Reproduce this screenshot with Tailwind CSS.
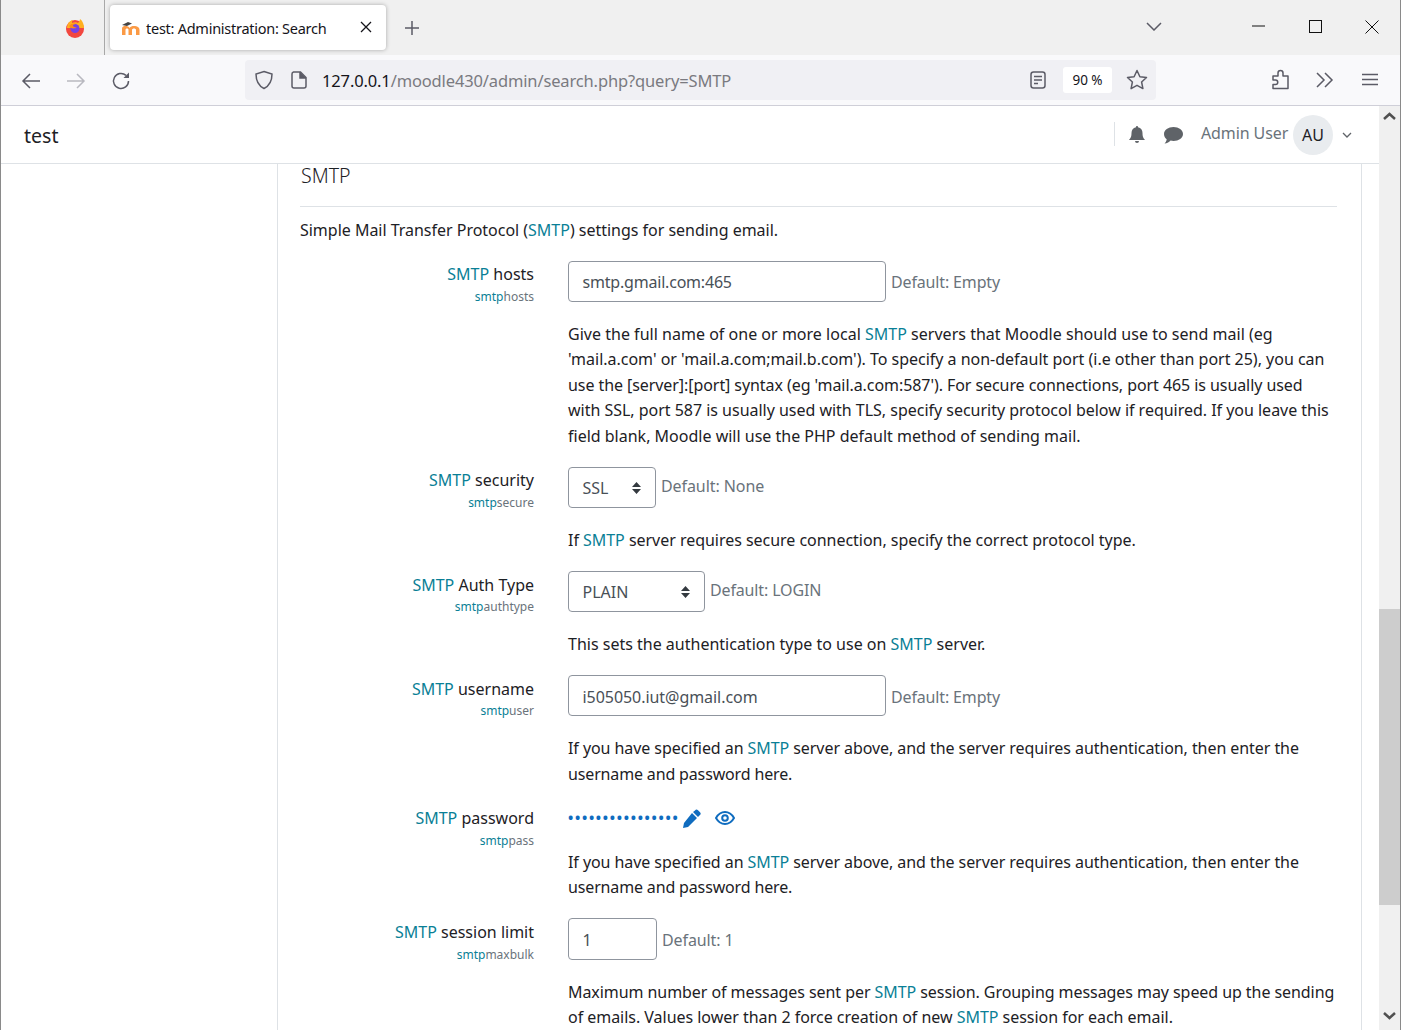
<!DOCTYPE html>
<html lang="en">
<head>
<meta charset="UTF-8">
<title>test: Administration: Search</title>
<script src="https://cdn.jsdelivr.net/npm/@tailwindcss/browser@4"></script>
</head>
<body class="font-['Noto_Sans',sans-serif] bg-white text-[#1d2125]">
<div class="h-[1030px] w-[1401px] flex flex-col overflow-hidden border-x border-[#8a8a8a]">

  <!-- tab strip -->
  <div class="h-[55px] shrink-0 bg-[#f0f0f0] flex items-start relative">
    <div class="w-[104px] h-[55px] border-r border-[#a8a8a8] flex justify-end items-center pr-[19px]">
      <svg width="20" height="20" viewBox="0 0 20 20">
        <circle cx="10" cy="11" r="9" fill="#f2473f"/>
        <path d="M2 9C3 4 6 2 8 2c-1 1-1 2-1 3 2-1 5-1 6 0 1-1 2-3 2-4 3 2 4 6 4 9H2z" fill="#ffb01f"/>
        <circle cx="10" cy="10.500" r="4.500" fill="#7542e5"/>
        <path d="M4 8c2-3 6-3 9-2-2 0-5 0-5 2 0 1 3 1 4 2-1 0-4 1-6 0z" fill="#ff8a16"/>
      </svg>
    </div>
    <div class="ml-[5px] mt-[5px] w-[276px] h-[45px] bg-white rounded-[4px] shadow-[0_0_4px_rgba(0,0,0,0.3)] flex items-center pl-[11px]">
      <svg width="20" height="16" viewBox="0 0 20 16" class="shrink-0">
        <path d="M1 15V8.500C1 6.500 3 6 4.500 6S8 6.500 8.500 8c1-1.500 2.500-2 4.500-2 3 0 5.500 1 5.500 4v5h-3.500v-5c0-1-1-1.500-2-1.500s-2 .5-2 1.500v5H7.500v-5c0-1-.5-1.500-1.500-1.500S4.500 9 4.500 10v5z" fill="#fb9a45"/>
        <path d="M1 5l6-3 4 1.500L6 6z" fill="#444"/>
      </svg>
      <span class="ml-[5px] pt-[2px] text-[14.500px] tracking-[-0.26px] text-[#15141a] whitespace-nowrap">test: Administration: Search</span>
      <svg width="12" height="12" viewBox="0 0 12 12" class="ml-[34px] shrink-0 -translate-y-px" fill="none" stroke="#15141a" stroke-width="1.300"><path d="M1 1l10 10M11 1L1 11"/></svg>
    </div>
    <svg width="16" height="16" viewBox="0 0 16 16" class="ml-[18px] mt-[20px]" fill="none" stroke="#5b5b66" stroke-width="1.500"><path d="M8 1v14M1 8h14"/></svg>
    <svg width="16" height="9" viewBox="0 0 16 9" class="absolute left-[1145px] top-[22px]" fill="none" stroke="#5b5b66" stroke-width="1.500"><path d="M1 1l7 7 7-7"/></svg>
    <svg width="13" height="2" viewBox="0 0 13 2" class="absolute left-[1251px] top-[25px]"><path d="M0 1h13" stroke="#111" stroke-width="1"/></svg>
    <svg width="13" height="13" viewBox="0 0 13 13" class="absolute left-[1308px] top-[20px]" fill="none" stroke="#111" stroke-width="1"><rect x=".5" y=".5" width="12" height="12"/></svg>
    <svg width="14" height="14" viewBox="0 0 14 14" class="absolute left-[1364px] top-[20px]" fill="none" stroke="#111" stroke-width="1"><path d="M.5.5l13 13M13.500.5l-13 13"/></svg>
  </div>

  <!-- nav toolbar -->
  <div class="h-[51px] shrink-0 bg-[#f9f9fb] border-b border-[#cfcfd8] flex items-center relative">
    <svg width="20" height="20" viewBox="0 0 20 20" class="ml-[20px] translate-y-px" fill="none" stroke="#5b5b66" stroke-width="1.500"><path d="M19 10H2M9 3l-7 7 7 7"/></svg>
    <svg width="20" height="20" viewBox="0 0 20 20" class="ml-[25px] translate-y-px" fill="none" stroke="#b9b9c0" stroke-width="1.500"><path d="M1 10h17M11 3l7 7-7 7"/></svg>
    <svg width="20" height="20" viewBox="0 0 20 20" class="ml-[25px] translate-y-px" fill="none" stroke="#5b5b66" stroke-width="1.500"><path d="M17.500 10a7.500 7.500 0 1 1-2.500-5.600"/><path d="M18 1.500V7h-5.500z" fill="#5b5b66" stroke="none"/></svg>
    <div class="ml-[104px] absolute left-[140px] top-[5px] w-[911px] h-[40px] bg-[#f0f0f4] rounded-[4px] flex items-center">
      <svg width="20" height="20" viewBox="0 0 20 20" class="ml-[9px] shrink-0" fill="none" stroke="#5b5b66" stroke-width="1.500"><path d="M10 1.500l8 2.500c0 7-2 11.500-8 14.500C4 15.500 2 11 2 4z"/></svg>
      <svg width="16" height="18" viewBox="0 0 16 18" class="ml-[17px] shrink-0" fill="none" stroke="#5b5b66" stroke-width="1.500"><path d="M2.500 1h7L15 6.500V15a2 2 0 0 1-2 2H3a2 2 0 0 1-2-2V3a2 2 0 0 1 1.500-2z"/><path d="M9 1v6h6" fill="#5b5b66"/></svg>
      <span class="ml-[15px] pt-[3px] text-[16.500px] whitespace-nowrap tracking-[-0.14px] text-[#15141a]">127.0.0.1<span class="text-[#7a7a80]">/moodle430/admin/search.php?query=SMTP</span></span>
      <div class="ml-auto flex items-center">
        <svg width="16" height="18" viewBox="0 0 16 18" fill="none" stroke="#5b5b66" stroke-width="1.500"><rect x="1" y="1" width="14" height="16" rx="2.500"/><path d="M4 5.500h8M4 9h8M4 12.500h4"/></svg>
        <div class="ml-[17px] w-[49px] h-[26px] bg-white rounded-[3px] flex items-center justify-center text-[13.500px] text-[#15141a]">90 %</div>
        <svg width="22" height="21" viewBox="0 0 22 21" class="ml-[14px] mr-[8px] -translate-y-px" fill="none" stroke="#5b5b66" stroke-width="1.500" stroke-linejoin="round"><path d="M11 1.500l2.900 6.200 6.600.8-4.900 4.500 1.300 6.600L11 16.300l-5.900 3.300 1.300-6.600L1.500 8.500l6.600-.8z"/></svg>
      </div>
    </div>
    <div class="absolute left-[1271px] top-[14px] flex items-center">
      <svg width="18" height="21" viewBox="0 0 18 21" fill="none" stroke="#5b5b66" stroke-width="1.500" stroke-linejoin="round"><path d="M1 19.500v-4h2.500a2 2 0 0 0 0-4.500H1V7h5V4a2.500 2.500 0 0 1 5 0v3h5v12.500z"/></svg>
      <svg width="18" height="16" viewBox="0 0 18 16" class="ml-[26px]" fill="none" stroke="#5b5b66" stroke-width="1.500"><path d="M1 1l7 7-7 7M9 1l7 7-7 7"/></svg>
      <svg width="16" height="13" viewBox="0 0 16 13" class="ml-[28px]" fill="none" stroke="#5b5b66" stroke-width="1.500"><path d="M0 1.500h16M0 6.500h16M0 11.500h16"/></svg>
    </div>
  </div>

  <!-- page area with scrollbar -->
  <div class="flex-1 min-h-0 flex">
    <div class="w-[1378px] flex flex-col min-w-0">
      <!-- moodle top nav -->
      <div class="h-[58px] shrink-0 border-b border-[#dee2e6] flex items-center relative">
        <span class="ml-[23px] pt-[2px] text-[19.500px] text-[#1d2125]">test</span>
        <div class="absolute left-[1113px] top-[16px] w-px h-[24px] bg-[#dee2e6]"></div>
        <svg width="16" height="18" viewBox="0 0 16 18" class="absolute left-[1128px] top-[20px]" fill="#5f6368"><path d="M8 0c.7 0 1 .5 1 1.200C12 2 13.500 4 13.500 7c0 4 1 5 2.500 7H0c1.500-2 2.500-3 2.500-7C2.500 4 4 2 7 1.200 7 .5 7.300 0 8 0zM6 15h4a2 2 0 0 1-4 0z"/></svg>
        <svg width="19" height="17" viewBox="0 0 19 17" class="absolute left-[1163px] top-[21px]" fill="#5f6368"><path d="M9.500 0C14.700 0 19 3 19 7s-4.300 7-9.500 7c-1 0-2-.1-2.900-.4C5.500 15 3 16.500.5 16.500c1-1 2-2.500 2.200-4.300C1 11 0 9 0 7c0-4 4.300-7 9.500-7z"/></svg>
        <span class="absolute left-[1200px] top-[15px] text-[16px] tracking-[-0.1px] text-[#6a737b] whitespace-nowrap">Admin User</span>
        <div class="absolute left-[1292px] top-[9px] w-[40px] h-[40px] rounded-full bg-[#e9ecef] flex items-center justify-center text-[16px] text-[#1d2125]">AU</div>
        <svg width="10" height="6" viewBox="0 0 10 6" class="absolute left-[1341px] top-[26px]" fill="none" stroke="#5f6368" stroke-width="1.300"><path d="M1 1l4 4 4-4"/></svg>
      </div>

      <div class="flex-1 min-h-0 flex">
        <div class="w-[277px] shrink-0 border-r border-[#dee2e6]"></div>
        <div class="w-[1084px] shrink-0 border-r border-[#dee2e6] pl-[22px] pr-[24px] text-[16px] leading-[25.400px]">
          <h3 class="pl-px text-[19.500px] leading-[24px] font-light text-[#1d2125] pb-[18px] border-b border-[#dee2e6]">SMTP</h3>
          <p class="mt-[11px] whitespace-nowrap tracking-[-0.02px]">Simple Mail Transfer Protocol (<a class="text-[#0a7f96]">SMTP</a>) settings for sending email.</p>

          <!-- SMTP hosts -->
          <div class="mt-[18px] flex">
            <div class="w-[234px] text-right shrink-0 pt-[1px]"><div><a class="text-[#0a7f96]">SMTP</a> hosts</div><div class="-mt-px text-[12px] leading-[20px] text-[#6a737b]"><a class="text-[#0a7f96]">smtp</a>hosts</div></div>
            <div class="ml-[34px] min-w-0">
              <div class="flex items-center"><div class="w-[318px] h-[41px] border border-[#8f959e] rounded-[4px] pl-[13.500px] pt-[1px] flex items-center text-[#495057] tracking-[-0.2px]">smtp.gmail.com:465</div><span class="ml-[5px] pt-[1px] text-[#6a737b] tracking-[-0.15px]">Default: Empty</span></div>
              <p class="mt-[19.600px] whitespace-nowrap"><span class="tracking-[0.02px]">Give the full name of one or more local <a class="text-[#0a7f96]">SMTP</a> servers that Moodle should use to send mail (eg</span><br><span class="tracking-[-0.01px]">'mail.a.com' or 'mail.a.com;mail.b.com'). To specify a non-default port (i.e other than port 25), you can</span><br><span class="tracking-[-0.07px]">use the [server]:[port] syntax (eg 'mail.a.com:587'). For secure connections, port 465 is usually used</span><br><span class="tracking-[-0.02px]">with SSL, port 587 is usually used with TLS, specify security protocol below if required. If you leave this</span><br>field blank, Moodle will use the PHP default method of sending mail.</p>
            </div>
          </div>

          <!-- SMTP security -->
          <div class="mt-[18.400px] flex">
            <div class="w-[234px] text-right shrink-0 pt-[1px]"><div><a class="text-[#0a7f96]">SMTP</a> security</div><div class="-mt-px text-[12px] leading-[20px] text-[#6a737b]"><a class="text-[#0a7f96]">smtp</a>secure</div></div>
            <div class="ml-[34px] min-w-0">
              <div class="flex items-center"><div class="w-[88px] h-[41px] border border-[#8f959e] rounded-[4px] pl-[13.500px] pr-[14px] pt-[1px] flex items-center justify-between text-[#495057]">SSL<svg width="9" height="12" viewBox="0 0 9 12" fill="#343a40"><path d="M4.500 0L9 5H0zM0 7h9l-4.500 5z"/></svg></div><span class="ml-[5px] text-[#6a737b] -mt-[3px] tracking-[-0.08px]">Default: None</span></div>
              <p class="mt-[20px] whitespace-nowrap tracking-[-0.03px]">If <a class="text-[#0a7f96]">SMTP</a> server requires secure connection, specify the correct protocol type.</p>
            </div>
          </div>

          <!-- SMTP Auth Type -->
          <div class="mt-[17px] flex">
            <div class="w-[234px] text-right shrink-0 pt-[2px]"><div><a class="text-[#0a7f96]">SMTP</a> Auth Type</div><div class="-mt-px text-[12px] leading-[20px] text-[#6a737b]"><a class="text-[#0a7f96]">smtp</a>authtype</div></div>
            <div class="ml-[34px] min-w-0">
              <div class="flex items-center"><div class="w-[137px] h-[41px] border border-[#8f959e] rounded-[4px] pl-[13.500px] pr-[14px] pt-[2px] flex items-center justify-between text-[#495057]">PLAIN<svg width="9" height="12" viewBox="0 0 9 12" fill="#343a40"><path d="M4.500 0L9 5H0zM0 7h9l-4.500 5z"/></svg></div><span class="ml-[5px] text-[#6a737b] -mt-[1px] tracking-[-0.14px]">Default: LOGIN</span></div>
              <p class="mt-[20px] whitespace-nowrap">This sets the authentication type to use on <a class="text-[#0a7f96]">SMTP</a> server.</p>
            </div>
          </div>

          <!-- SMTP username -->
          <div class="mt-[18px] flex">
            <div class="w-[234px] text-right shrink-0 pt-[2px]"><div><a class="text-[#0a7f96]">SMTP</a> username</div><div class="-mt-[2px] text-[12px] leading-[20px] text-[#6a737b]"><a class="text-[#0a7f96]">smtp</a>user</div></div>
            <div class="ml-[34px] min-w-0">
              <div class="flex items-center"><div class="w-[318px] h-[41px] border border-[#8f959e] rounded-[4px] pl-[13.500px] pt-[4px] flex items-center text-[#495057] tracking-[-0.05px]">i505050.iut@gmail.com</div><span class="ml-[5px] pt-[4px] text-[#6a737b] tracking-[-0.15px]">Default: Empty</span></div>
              <p class="mt-[20px] whitespace-nowrap"><span class="tracking-[-0.065px]">If you have specified an <a class="text-[#0a7f96]">SMTP</a> server above, and the server requires authentication, then enter the</span><br><span class="tracking-[-0.15px]">username and password here.</span></p>
            </div>
          </div>

          <!-- SMTP password -->
          <div class="mt-[18px] flex">
            <div class="w-[234px] text-right shrink-0 pt-[1px]"><div><a class="text-[#0a7f96]">SMTP</a> password</div><div class="text-[12px] leading-[20px] text-[#6a737b]"><a class="text-[#0a7f96]">smtp</a>pass</div></div>
            <div class="ml-[34px] min-w-0">
              <div class="flex items-center h-[26px] text-[#0f6cbf]">
                <span class="tracking-[1.700px] text-[14px] font-bold leading-none">••••••••••••••••</span>
                <svg width="19" height="19" viewBox="0 0 19 19" class="ml-[3px]" fill="#0f6cbf"><path d="M13 1.500a2 2 0 0 1 3-.3l2 2a2 2 0 0 1-.3 3L16 8l-5-5zM10 4l5 5-9 9-5 1 1-5z"/></svg>
                <svg width="20" height="16" viewBox="0 0 20 16" class="ml-[14px]" fill="none" stroke="#0f6cbf" stroke-width="2"><path d="M1 8c2-3.500 5-6 9-6s7 2.500 9 6c-2 3.500-5 6-9 6s-7-2.500-9-6z"/><circle cx="10" cy="8" r="2.800"/></svg>
              </div>
              <p class="mt-[19px] whitespace-nowrap"><span class="tracking-[-0.065px]">If you have specified an <a class="text-[#0a7f96]">SMTP</a> server above, and the server requires authentication, then enter the</span><br><span class="tracking-[-0.15px]">username and password here.</span></p>
            </div>
          </div>

          <!-- SMTP session limit -->
          <div class="mt-[17px] flex">
            <div class="w-[234px] text-right shrink-0 pt-[2px]"><div><a class="text-[#0a7f96]">SMTP</a> session limit</div><div class="text-[12px] leading-[20px] text-[#6a737b]"><a class="text-[#0a7f96]">smtp</a>maxbulk</div></div>
            <div class="ml-[34px] min-w-0">
              <div class="flex items-center"><div class="w-[89px] h-[42px] border border-[#8f959e] rounded-[4px] pl-[13.500px] pt-[3px] flex items-center text-[#495057]">1</div><span class="ml-[5px] pt-[3px] text-[#6a737b] tracking-[-0.1px]">Default: 1</span></div>
              <p class="mt-[20px] whitespace-nowrap"><span class="tracking-[-0.065px]">Maximum number of messages sent per <a class="text-[#0a7f96]">SMTP</a> session. Grouping messages may speed up the sending</span><br><span class="tracking-[-0.03px]">of emails. Values lower than 2 force creation of new <a class="text-[#0a7f96]">SMTP</a> session for each email.</span></p>
            </div>
          </div>
        </div>
      </div>
    </div>

    <!-- scrollbar -->
    <div class="w-[21px] shrink-0 bg-[#f0f0f0] flex flex-col items-center">
      <svg width="13" height="8" viewBox="0 0 13 8" class="mt-[6px]" fill="none" stroke="#505050" stroke-width="2.500"><path d="M1 7l5.500-5L12 7"/></svg>
      <div class="mt-[489px] w-full h-[296px] bg-[#cdcdcd]"></div>
      <svg width="13" height="8" viewBox="0 0 13 8" class="mt-[107px]" fill="none" stroke="#505050" stroke-width="2.500"><path d="M1 1l5.500 5L12 1"/></svg>
    </div>
  </div>
</div>
</body>
</html>
